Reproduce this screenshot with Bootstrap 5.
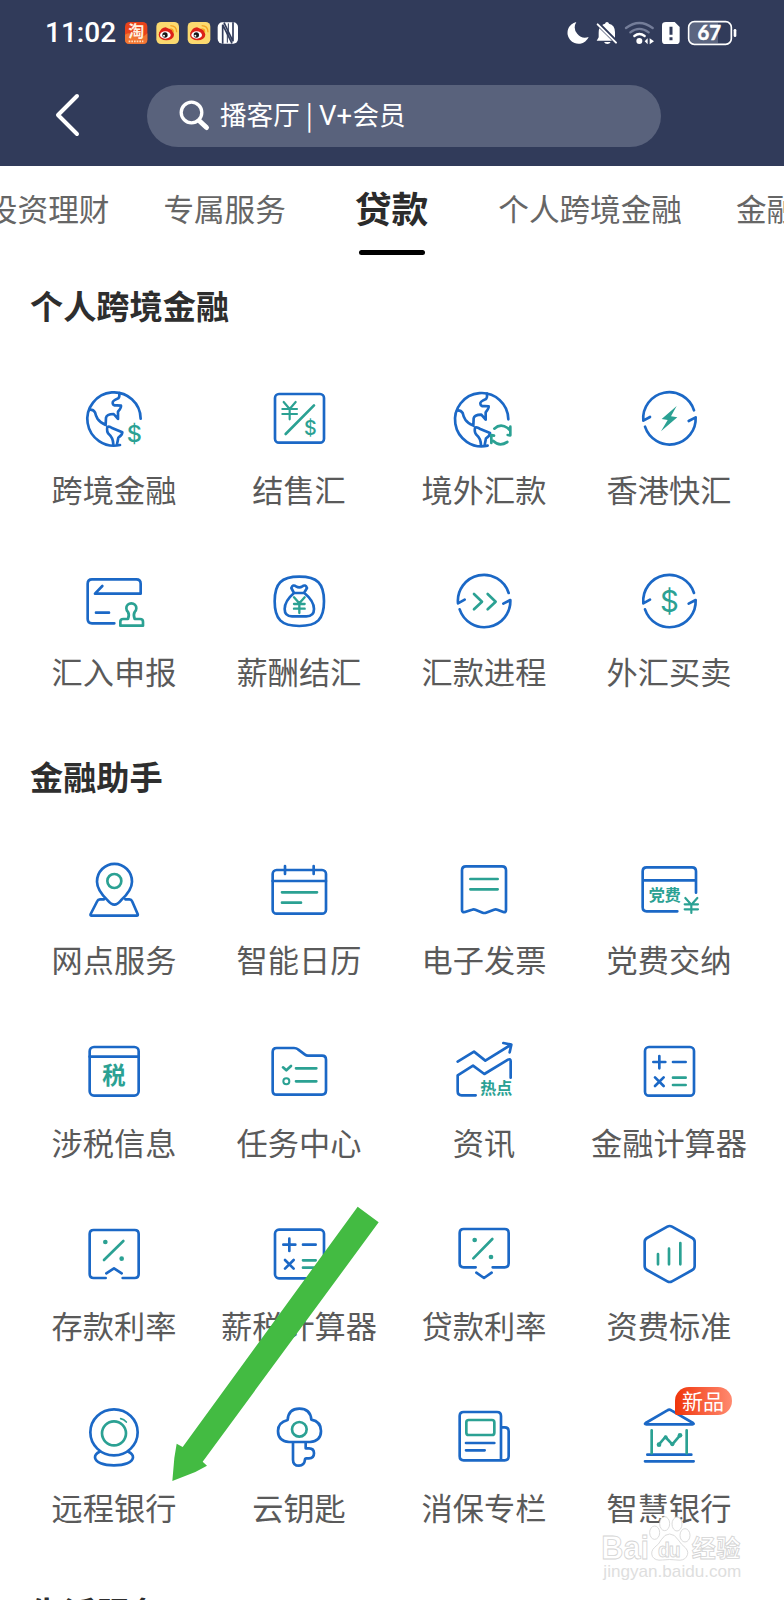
<!DOCTYPE html>
<html lang="zh-CN">
<head>
<meta charset="utf-8">
<meta name="viewport" content="width=device-width, initial-scale=1">
<title>贷款</title>
<link rel="stylesheet" href="https://cdn.jsdelivr.net/npm/bootstrap@5.3.0/dist/css/bootstrap.min.css">
<style>
body{font-family:"Noto Sans CJK SC",sans-serif;background:#fff;color:#333}
.screen{width:784px;height:1600px}
.topbar{background:#313b5a;height:166px}
.status{height:66px;padding:0 46px 0 45px}
.clock{font:500 28px/30px Roboto,sans-serif;width:78px}
.searchrow{height:62px;margin-top:19px;padding-left:54px}
.search-pill{width:514px;height:62px;background:#59627c;margin-left:65px;padding-left:32px;font-size:26.6px;line-height:40px}
.search-pill span{margin-top:-4px}
.search-pill i{font:400 27.5px Roboto,"Noto Sans CJK SC",sans-serif;letter-spacing:.2px}
.tabs{height:112px;margin-left:-13px;color:#666;font-size:30.6px;line-height:44px;padding-top:19.500px;white-space:nowrap}
.tabs .on{font-size:36.800px;font-weight:700;color:#2b2b2b;margin:-1px 70px 0 69px}
.tabs .on::after{content:"";display:block;width:66px;height:5px;border-radius:3px;background:#000;margin:21.500px auto 0}
.sec-title{font-size:33.2px;font-weight:700;line-height:40px;margin:7px 0 58px 30px;color:#2e2e2e}
.tiles{padding:0 22.5px 0 21.5px}
.tile{height:182.800px;padding:0}
.tile svg{width:72px;height:72px;display:block;margin:0 auto 13.500px}
.tile span{display:block;font-size:31.2px;line-height:40px;color:#5a5a5a;white-space:nowrap}
.helper .tile{position:relative}
.helper{margin-top:.400px}
.ic{fill:none;stroke:#1b68c6;stroke-width:8;stroke-linecap:round;stroke-linejoin:round}
.ic .g{stroke:#2ba193}
.ic text,.ic .f{fill:#2ba193;stroke:none}
.ic text{font-family:"Noto Sans CJK SC",sans-serif;font-weight:700;text-anchor:middle}
.ic text.cur{font-family:Inter,sans-serif;font-weight:500}
.new-tag{left:98px;top:-15px;width:57px;height:28px;border-radius:14px 14px 14px 2px;background:linear-gradient(90deg,#f0350b,#ff8a70);color:#fff;font-size:21px;line-height:27px}
.pointer{left:60px;top:1200px}
.wm{left:596px;top:1510px}
</style>
</head>
<body>
<div class="screen position-relative overflow-hidden">
<header class="topbar">
  <div class="status d-flex align-items-center justify-content-between">
    <div class="d-flex align-items-center">
      <div class="clock text-white">11:02</div>
      <svg width="118" height="26" viewBox="369 60 354 78">
        <rect x="375" y="66" width="67" height="66" rx="14" fill="#e9431b"/><path d="M375 104q16-10 30 4t37-8v20q0 12-12 12h-42q-13 0-13-12z" fill="#f27532"/>
        <text x="409" y="112" font-size="48" font-weight="700" text-anchor="middle" fill="#fff0df">淘</text><path d="M386 124h44" stroke="#ffdcb8" stroke-width="5" stroke-dasharray="5 3"/>
        <g id="weibo"><rect x="469" y="66" width="68" height="66" rx="14" fill="#fbd96f"/><ellipse cx="499" cy="104" rx="23" ry="17" fill="#dc2118"/><path d="M477 100q6-18 20-18l10 4 12 2-2 14z" fill="#dc2118"/><ellipse cx="496" cy="105" rx="16" ry="11" fill="#fff"/><circle cx="495" cy="105" r="8" fill="#151515"/><circle cx="492" cy="107" r="3" fill="#fff"/><path d="M511 87q9 0 9 10M511 77q19 0 19 20" fill="none" stroke="#f3a422" stroke-width="4"/></g>
        <use href="#weibo" x="94"/>
        <rect x="653" y="67" width="61" height="64" rx="14" fill="#fff"/><path d="M668 131V74l28 56M672 68l27 56V67" stroke="#313b5a" stroke-width="5" fill="none"/><path d="M682 128V94M685 70v34" stroke="#313b5a" stroke-width="3"/>
      </svg>
    </div>
    <svg width="173" height="28" viewBox="519 57 519 84">
      <path d="M553 66A33 33 0 1 0 590 111A31 31 0 0 1 553 66Z" fill="#fff"/>
      <path d="M645 66q-5 0-6 5-5 1-8 4l38 38V97q0-22-18-26-1-5-6-5zM622 85q-2 5-2 13v14l-6 10h46zM636 126h20q-3 6-10 6t-10-6z" fill="#fff"/><path d="M617 73l55 55" stroke="#fff" stroke-width="6" stroke-linecap="round"/>
      <g fill="none" stroke-width="7" stroke-linecap="round"><path d="M702 84q40-30 80 0M715 97q27-21 55 0" stroke="#747d99"/><path d="M727 108q15-12 31 0" stroke="#fff"/></g><circle cx="742" cy="123" r="9" fill="#fff"/><path d="M767 115v18l-9-9zM773 133v-18l13 9z" fill="#fff"/>
      <path d="M822 66h26l15 15v41q0 10-10 10h-33q-10 0-10-10V76q0-10 12-10z" fill="#fff"/><path d="M837 80v24M837 112v9" stroke="#313b5a" stroke-width="9"/>
      <path d="M905 68h73v61h-73q-12 0-12-12V80q0-12 12-12z" fill="#5b6580"/><rect x="890" y="65" width="128" height="68" rx="17" fill="none" stroke="#fff" stroke-width="5"/><path d="M1029 91v16" stroke="#fff" stroke-width="8" stroke-linecap="round"/>
      <text x="952" y="121" text-anchor="middle" font-family="Lato" font-size="61" font-weight="700" stroke="#fff" stroke-width="1.500" fill="#fff">67</text>
    </svg>
  </div>
  <div class="searchrow d-flex align-items-center">
    <svg width="28" height="46" viewBox="0 0 28 46" fill="none" stroke="#fff" stroke-width="4" stroke-linecap="round" stroke-linejoin="round"><path d="M23 3 4 22 23 41"/></svg>
    <div class="search-pill rounded-pill d-flex align-items-center text-white">
      <svg class="me-2" width="33" height="32" viewBox="0 0 33 32" fill="none" stroke="#fff"><circle cx="12.500" cy="12.500" r="10.300" stroke-width="3.300"/><path d="M20.500 21l7 6.500" stroke-width="5" stroke-linecap="round"/></svg><span>播客厅 | <i>V+</i>会员</span>
    </div>
  </div>
</header>
<nav class="tabs d-flex"><div>投资理财</div><div style="margin-left:54px">专属服务</div><div class="on">贷款</div><div>个人跨境金融</div><div style="margin-left:54px">金融助手</div></nav>

<h2 class="sec-title">个人跨境金融</h2>
<div class="tiles"><div class="row g-0 text-center">
  <div class="tile col-3"><svg class="ic" viewBox="54 39 216 216"><g id="globe"><path d="M242 146A80 80 0 1 0 180 225"/><path d="M178 69q1 12-3 16-18 7-17 14 1 9 13 7l12 1q1 6-9 18v22l-13-15q-21 0-23 11l-1 22q-17-8-24-18-6-10-8-20-5-9-17-8M142 171q6-3 14 3l31 13q0 9-12 16l-4 20M142 171q-3 14 5 22 12 10 13 30"/></g><text class="cur" x="223" y="217" font-size="70">$</text></svg><span>跨境金融</span></div>
  <div class="tile col-3"><svg class="ic" viewBox="609 39 216 216"><rect x="645" y="72" width="147" height="146" rx="12"/><path class="g" d="M762 106l-85 86"/><path class="g" d="M671 96l18 21 18-21M689 118v30M667 117h44M667 132h44" stroke-width="6.500"/><text class="cur" x="751" y="195" font-size="59">$</text></svg><span>结售汇</span></div>
  <div class="tile col-3"><svg class="ic" viewBox="54 39 216 216"><use href="#globe" x="-7" y="2"/><path class="g" d="M193 176q18-17 40-2l6 6M241 170v26l-8-1M184 195v24M184 195l8 2M190 213q18 18 42 3"/></svg><span>境外汇款</span></div>
  <div class="tile col-3"><svg class="ic" viewBox="609 39 216 216"><path id="cycle" d="M792 121A78 78 0 0 0 640 152L660 141M645 170A78 78 0 0 0 797 142L776 153"/><path class="f" d="M740 108l-45 39 18 3-20 34 49-42-19-3z"/></svg><span>香港快汇</span></div>
  <div class="tile col-3"><svg class="ic" viewBox="54 588 216 216"><path d="M163 760H96q-13 0-13-13V641q0-13 13-13h133q13 0 13 13v30H105l22-23M108 728h39"/><path class="g" d="M204 747q5-12 0-21-5-5-5-11a15 15 0 0 1 30 0q0 6-5 11-5 9 0 21h16q9 0 9 8v12h-68v-12q0-8 9-8z"/></svg><span>汇入申报</span></div>
  <div class="tile col-3"><svg class="ic" viewBox="609 588 216 216"><path d="M718 620c54 0 74 20 74 74s-20 74-74 74-74-20-74-74 20-74 74-74z"/><path d="M702 669h30l9-15q-5-12-14-5-9 6-19 0-9-7-14 5zM702 669q-28 24-28 48 0 22 22 22h43q23 0 23-22 0-24-29-48"/><path class="g" d="M702 682l16 18 16-18M718 700v29M702 702h32M702 716h32" stroke-width="7"/></svg><span>薪酬结汇</span></div>
  <div class="tile col-3"><svg class="ic" viewBox="54 588 216 216"><use href="#cycle" x="-556" y="548"/><path class="g" d="M132 672l24 23-24 23M173 672l24 23-24 23"/></svg><span>汇款进程</span></div>
  <div class="tile col-3"><svg class="ic" viewBox="609 588 216 216"><use href="#cycle" y="548"/><text class="cur" x="718" y="725" font-size="88" style="font-weight:400">$</text></svg><span>外汇买卖</span></div>
</div></div>

<h2 class="sec-title">金融助手</h2>
<div class="tiles helper"><div class="row g-0 text-center">
  <div class="tile col-3"><svg class="ic" viewBox="54 39 216 216"><path d="M163 191q-9 0-20-13-32-31-32-56a52 53 0 0 1 105 0q0 25-33 56-11 13-20 13zM132 175h-12q-6 0-8 5l-20 39q-2 5 3 5h135q5 0 3-5l-17-39q-2-5-8-5h-12"/><circle class="g" cx="163" cy="120" r="21"/></svg><span>网点服务</span></div>
  <div class="tile col-3"><svg class="ic" viewBox="609 39 216 216"><rect x="638" y="87" width="160" height="131" rx="12"/><path d="M638 120h160M675 75v24M761 75v24"/><path class="g" d="M666 154h105M666 185h57"/></svg><span>智能日历</span></div>
  <div class="tile col-3"><svg class="ic" viewBox="54 39 216 216"><path d="M108 76h108q12 0 12 12v119q0 8-8 6l-18-7q-5-2-10 0l-24 9q-5 2-10 0l-22-9q-5-2-10 0l-21 7q-9 2-9-6V88q0-12 12-12z"/><path class="g" d="M121 114h82M121 145h82"/></svg><span>电子发票</span></div>
  <div class="tile col-3"><svg class="ic" viewBox="609 39 216 216"><path d="M742 211h-92q-12 0-12-12V91q0-12 12-12h136q12 0 12 12v64M638 118h160"/><text x="704" y="180" font-size="48">党费</text><path class="g" d="M766 171l18 20 18-20M784 191v25M764 190h40M764 205h40" stroke-width="6.500"/></svg><span>党费交纳</span></div>
  <div class="tile col-3"><svg class="ic" viewBox="54 588 216 216"><rect x="89" y="621" width="147" height="146" rx="13"/><path d="M89 650h147"/><text x="162" y="732" font-size="70">税</text></svg><span>涉税信息</span></div>
  <div class="tile col-3"><svg class="ic" viewBox="609 588 216 216"><path d="M650 624h52q7 0 12 4l21 16q4 3 9 3h42q12 0 12 12v92q0 13-12 13H650q-12 0-12-12V636q0-12 12-12z"/><path class="g" d="M669 682l10 9 14-13M708 685h61M708 724h61"/><circle class="g" cx="679" cy="724" r="9" stroke-width="6"/></svg><span>任务中心</span></div>
  <div class="tile col-3"><svg class="ic" viewBox="54 588 216 216"><path d="M83 665l49-30 34 27 76-47M220 609l24 5-5 23M137 766H95q-12 0-12-12v-48l46-29 34 25 71-43q8-4 8 5v49"/><text x="199" y="763" font-size="48">热点</text></svg><span>资讯</span></div>
  <div class="tile col-3"><svg class="ic" viewBox="609 588 216 216"><g id="calc"><rect x="645" y="621" width="147" height="146" rx="12"/><path d="M670 666h36M688 648v37M729 666h38M675 712l26 26M701 712l-26 26"/><path class="g" d="M729 713h38M729 735h38"/></g></svg><span>金融计算器</span></div>
  <div class="tile col-3"><svg class="ic" viewBox="54 57 216 216"><path d="M137 234H101q-12 0-12-12V102q0-12 12-12h123q12 0 12 12v120q0 12-12 12h-36M139 220l23-15 23 15"/><path class="g" d="M190 123l-58 57"/><circle class="f" cx="136" cy="126" r="7"/><circle class="f" cx="185" cy="176" r="7"/></svg><span>存款利率</span></div>
  <div class="tile col-3"><svg class="ic" viewBox="609 57 216 216"><use href="#calc" y="-532"/></svg><span>薪税计算器</span></div>
  <div class="tile col-3"><svg class="ic" viewBox="54 57 216 216"><path d="M137 202H101q-12 0-12-12V99q0-12 12-12h123q12 0 12 12v91q0 12-12 12h-36M139 218l23 16 23-16"/><path class="g" d="M187 117l-57 58"/><circle class="f" cx="134" cy="120" r="7"/><circle class="f" cx="183" cy="171" r="7"/></svg><span>贷款利率</span></div>
  <div class="tile col-3"><svg class="ic" viewBox="609 57 216 216"><path d="M712 80q7-4 14 0l61 34q7 4 7 12v72q0 8-7 12l-61 34q-7 4-14 0l-61-34q-7-4-7-12v-72q0-8 7-12z"/><path class="g" d="M684 162v31M717 146v47M751 129v64"/></svg><span>资费标准</span></div>
  <div class="tile col-3"><svg class="ic" viewBox="54 606 216 216"><ellipse cx="162" cy="697" rx="71" ry="69"/><path d="M119 755q-14 6-14 17c0 15 26 24 57 24s57-9 57-24q0-11-14-17"/><circle class="g" cx="162" cy="700" r="36"/><path class="g" d="M182 656q10 2 17 10" stroke-width="5"/></svg><span>远程银行</span></div>
  <div class="tile col-3"><svg class="ic" viewBox="609 606 216 216"><path d="M687 726q-33-3-33-33 0-26 29-33 2-34 35-34t36 33q29 6 29 34 0 30-33 33zM699 727v52q0 18 18 18 16 0 18-18 0-4 4-4h8q15 0 15-15t-15-15h-10v-18"/><circle class="g" cx="718" cy="688" r="22"/></svg><span>云钥匙</span></div>
  <div class="tile col-3"><svg class="ic" viewBox="54 606 216 216"><path d="M101 636h100q12 0 12 12v133H101q-12 0-12-12V648q0-12 12-12zM213 682h11q12 0 12 12v75q0 12-12 12h-11M108 729h85M108 751h56"/><rect class="g" x="109" y="660" width="84" height="45" rx="7"/></svg><span>消保专栏</span></div>
  <div class="tile col-3"><svg class="ic" viewBox="609 606 216 216"><path d="M649 673q-7 0-2-4l65-38q6-4 12 0l65 38q5 4-2 4zM652 764h132M645 784h146"/><path class="g" d="M665 691v69M770 691v69M687 733l19-22 21 22 23-27"/><circle class="f" cx="687" cy="734" r="7"/><circle class="f" cx="707" cy="712" r="6"/><circle class="f" cx="727" cy="733" r="6"/><circle class="f" cx="750" cy="706" r="7"/></svg><span>智慧银行</span><div class="new-tag position-absolute">新品</div></div>
</div></div>

<h2 class="sec-title">生活服务</h2>

<svg class="pointer position-absolute" width="330" height="290" viewBox="0 0 990 870"><path d="M893 20L956 67 428 785 441 797 406 816 337 843 343 774 350 731 368 741Z" fill="#43bb42"/></svg>
<svg class="wm position-absolute" width="156" height="76" viewBox="108 90 468 228" fill="#fff" stroke="#d4d4d4" stroke-width="2.500">
  <g font-family="Liberation Sans" font-weight="700"><text x="124" y="238" font-size="98" textLength="143" lengthAdjust="spacingAndGlyphs">Bai</text>
  <ellipse cx="284" cy="158" rx="15" ry="20"/><ellipse cx="314" cy="131" rx="15" ry="21"/><ellipse cx="351" cy="132" rx="15" ry="21"/><ellipse cx="375" cy="166" rx="15" ry="20"/>
  <path d="M329 162q15 0 26 18 9 14 21 23 13 14 3 28-8 12-28 9-22-3-44 0-22 3-30-11-6-15 7-27 13-9 20-23 10-17 25-17z"/>
  <text x="294" y="230" font-size="58" textLength="68">du</text></g>
  <text x="395" y="232" font-size="72" font-weight="700" textLength="146">经验</text>
  <text x="130" y="290" font-family="Liberation Sans" font-size="51" textLength="414" lengthAdjust="spacingAndGlyphs" fill="#dedede" stroke="none">jingyan.baidu.com</text>
</svg>
</div>
<script src="https://cdn.jsdelivr.net/npm/bootstrap@5.3.0/dist/js/bootstrap.bundle.min.js"></script>
</body>
</html>
